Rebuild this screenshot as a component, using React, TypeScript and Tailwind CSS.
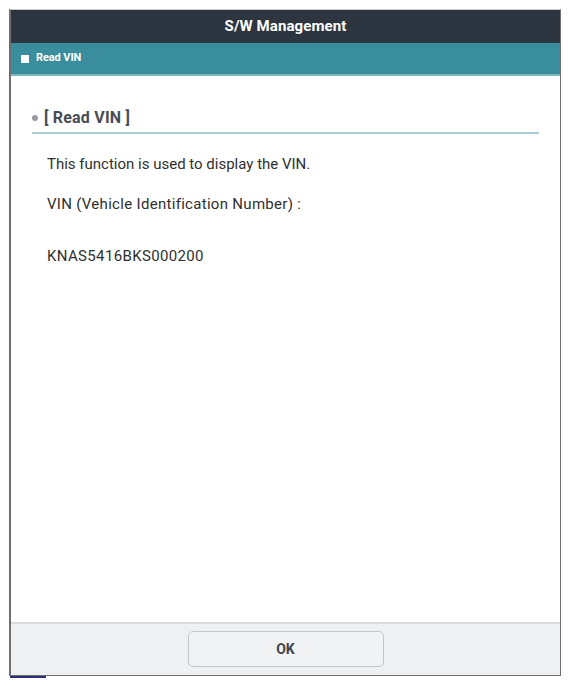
export default function App() {
  return (
    <div className="relative h-[686px] w-[569px] bg-white pl-[9px] pt-[9px] font-['Roboto',sans-serif]">
      <div className="flex h-[667px] w-[552px] flex-col border border-t-[#c8c8c8] border-x-[#6f6f6f] border-b-[#6f6f6f] border-l-2">
        <div className="flex h-[33px] shrink-0 items-center justify-center bg-[#2d3640] text-[15px] font-bold tracking-[0.1px] text-white">
          S/W Management
        </div>
        <div className="flex h-[33px] shrink-0 items-center gap-[7px] border-b-2 border-[#7db5bf] bg-[#3a8d9d] pl-[10px] text-[11px] font-bold text-white">
          <span className="h-[8px] w-[8px] bg-white" />
          <span className="tracking-[-0.1px]">Read VIN</span>
        </div>
        <div className="flex-1 px-[21px] pt-[31px]">
          <div className="flex h-[27px] items-center gap-[6px] border-b-2 border-[#a8cdd3] pb-[4px]">
            <span className="h-[6px] w-[6px] rounded-full bg-[#9a9ea3]" />
            <span className="text-[16px] font-bold tracking-[0.2px] text-[#484d53]">[ Read VIN ]</span>
          </div>
          <div className="pl-[15px] text-[15px] text-[#2f2f2f]">
            <p className="mt-[20px] leading-[20px]">This function is used to display the VIN.</p>
            <p className="mt-[20px] leading-[20px] tracking-[0.3px]">VIN (Vehicle Identification Number) :</p>
            <p className="mt-[32px] leading-[20px] tracking-[0.35px]">KNAS5416BKS000200</p>
          </div>
        </div>
        <div className="flex h-[53px] shrink-0 justify-center border-t-2 border-[#d9dadd] bg-[#eff0f2] pt-[7px]">
          <button
            type="button"
            className="h-[36px] w-[196px] rounded-[5px] border border-[#c4c5c8] bg-[#f1f2f4] text-[14px] font-bold text-[#3f444a]"
          >
            OK
          </button>
        </div>
      </div>
      <div className="absolute left-[10px] top-[676px] h-[2px] w-[36px] bg-[#2a2f7a]" />
    </div>
  )
}
